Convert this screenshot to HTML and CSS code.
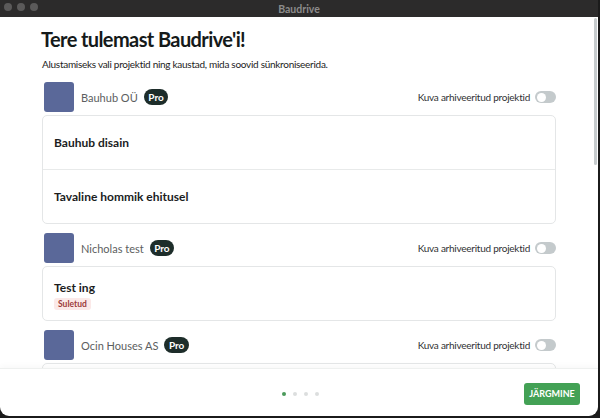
FILE: index.html
```html
<!DOCTYPE html>
<html lang="et">
<head>
<meta charset="utf-8">
<title>Baudrive</title>
<link rel="stylesheet" href="styles.css">
</head>
<body>
<div class="window">
  <div class="titlebar">
    <div class="lights"><span></span><span></span><span></span></div>
    <div class="wtitle">Baudrive</div>
  </div>
  <div class="body">
    <div class="scroll">
      <h1 class="title">Tere tulemast Baudrive'i!</h1>
      <p class="lead">Alustamiseks vali projektid ning kaustad, mida soovid sünkroniseerida.</p>

      <section class="org">
        <div class="orghead">
          <div class="avatar"></div>
          <span class="orgname">Bauhub OÜ</span>
          <span class="pro">Pro</span>
          <span class="spacer"></span>
          <span class="archlabel">Kuva arhiveeritud projektid</span>
          <span class="toggle"><span class="knob"></span></span>
        </div>
        <div class="card">
          <div class="row"><span class="pname">Bauhub disain</span></div>
          <div class="row"><span class="pname">Tavaline hommik ehitusel</span></div>
        </div>
      </section>

      <section class="org">
        <div class="orghead">
          <div class="avatar"></div>
          <span class="orgname">Nicholas test</span>
          <span class="pro">Pro</span>
          <span class="spacer"></span>
          <span class="archlabel">Kuva arhiveeritud projektid</span>
          <span class="toggle"><span class="knob"></span></span>
        </div>
        <div class="card">
          <div class="row row-tag"><span class="pname">Test ing</span><span class="closed">Suletud</span></div>
        </div>
      </section>

      <section class="org">
        <div class="orghead">
          <div class="avatar"></div>
          <span class="orgname">Ocin Houses AS</span>
          <span class="pro">Pro</span>
          <span class="spacer"></span>
          <span class="archlabel">Kuva arhiveeritud projektid</span>
          <span class="toggle"><span class="knob"></span></span>
        </div>
        <div class="card">
          <div class="row"></div>
        </div>
      </section>
      <div class="thumb"></div>
    </div>
    <div class="footer">
      <div class="dots"><span class="on"></span><span></span><span></span><span></span></div>
      <button class="next">JÄRGMINE</button>
    </div>
  </div>
</div>
</body>
</html>
```

FILE: styles.css
```css
* { box-sizing: border-box; }
html, body { margin: 0; padding: 0; }
body {
  background: #1b1b1b;
  width: 600px;
  height: 418px;
  overflow: hidden;
  font-family: Lato, "Noto Sans", sans-serif;
}
.window {
  width: 598px;
  height: 416px;
  background: #ffffff;
  border-radius: 0 0 9px 9px;
  overflow: hidden;
  display: flex;
  flex-direction: column;
}
.titlebar {
  height: 17px;
  flex: none;
  background: #2c2b2b;
  position: relative;
  display: flex;
  align-items: center;
  justify-content: center;
}
.lights {
  position: absolute;
  left: 4px;
  top: 3px;
  display: flex;
  gap: 5px;
}
.lights span {
  width: 8px;
  height: 8px;
  border-radius: 50%;
  background: #5b5a5a;
}
.wtitle {
  color: #8c8b8b;
  font-size: 10.5px;
  font-weight: 700;
}
.body {
  flex: 1;
  display: flex;
  flex-direction: column;
  min-height: 0;
}
.scroll {
  flex: 1;
  min-height: 0;
  overflow: hidden;
  position: relative;
  padding: 10px 42px 0 42px;
}
.thumb {
  position: absolute;
  right: 1px;
  top: 1px;
  width: 3px;
  height: 147px;
  border-radius: 2px;
  background: #c6cbcd;
}
.title {
  margin: 0 0 0 -1px;
  font-size: 20px;
  line-height: 24px;
  letter-spacing: -0.6px;
  font-weight: 700;
  color: #151a1a;
}
.lead {
  margin: 6px 0 0 0;
  font-size: 10px;
  line-height: 14px;
  letter-spacing: -0.28px;
  color: #222;
}
.org { margin-top: 11px; }
.org + .org { margin-top: 9px; }
.orghead {
  display: flex;
  align-items: center;
  height: 30px;
}
.avatar {
  width: 30px;
  height: 30px;
  border-radius: 3px;
  background: #5a6899;
  margin-left: 2px;
}
.orgname {
  margin-left: 7px;
  font-size: 11px;
  color: #5c5e60;
}
.pro {
  margin-left: 6px;
  height: 16px;
  padding: 0 4.5px;
  border-radius: 8px;
  background: #1d2d2a;
  color: #fff;
  font-size: 10px;
  font-weight: 700;
  line-height: 16px;
}
.spacer { flex: 1; }
.archlabel {
  font-size: 10px;
  letter-spacing: -0.25px;
  color: #2f3133;
  margin-right: 5px;
}
.toggle {
  width: 21px;
  height: 12px;
  border-radius: 6px;
  background: #c4cacc;
  position: relative;
  display: block;
}
.knob {
  position: absolute;
  left: 1.5px;
  top: 1.5px;
  width: 9px;
  height: 9px;
  border-radius: 50%;
  background: #fff;
}
.card {
  margin-top: 3px;
  border: 1px solid #e4e6e7;
  border-radius: 5px;
}
.row {
  height: 53px;
  display: flex;
  flex-direction: column;
  justify-content: center;
  padding: 0 11px;
}
.row + .row { border-top: 1px solid #e8eaea; height: 54px; }
.pname {
  font-size: 12px;
  font-weight: 700;
  color: #1b1d1e;
}
.row-tag { justify-content: flex-start; padding-top: 13px; }
.closed {
  align-self: flex-start;
  margin-top: 3px;
  height: 12px;
  padding: 0 4px;
  border-radius: 3px;
  background: #fbe9e8;
  color: #9c3b3a;
  font-size: 8.5px;
  font-weight: 700;
  line-height: 12px;
}
.footer {
  height: 48px;
  flex: none;
  border-top: 1px solid #eef0ef;
  box-shadow: 0 -2px 6px rgba(0,0,0,0.03);
  position: relative;
  display: flex;
  align-items: center;
  justify-content: flex-end;
  padding-right: 18px;
}
.dots {
  position: absolute;
  left: 282px;
  top: 23px;
  display: flex;
  gap: 7px;
}
.dots span {
  width: 4px;
  height: 4px;
  border-radius: 50%;
  background: #dcdede;
}
.dots span.on { background: #4b9a5b; }
.next {
  width: 56px;
  height: 22px;
  margin-top: 2px;
  border: none;
  border-radius: 3px;
  background: #43a155;
  color: #fff;
  font-family: Lato, "Noto Sans", sans-serif;
  font-size: 9px;
  font-weight: 700;
  padding: 0;
}
```
